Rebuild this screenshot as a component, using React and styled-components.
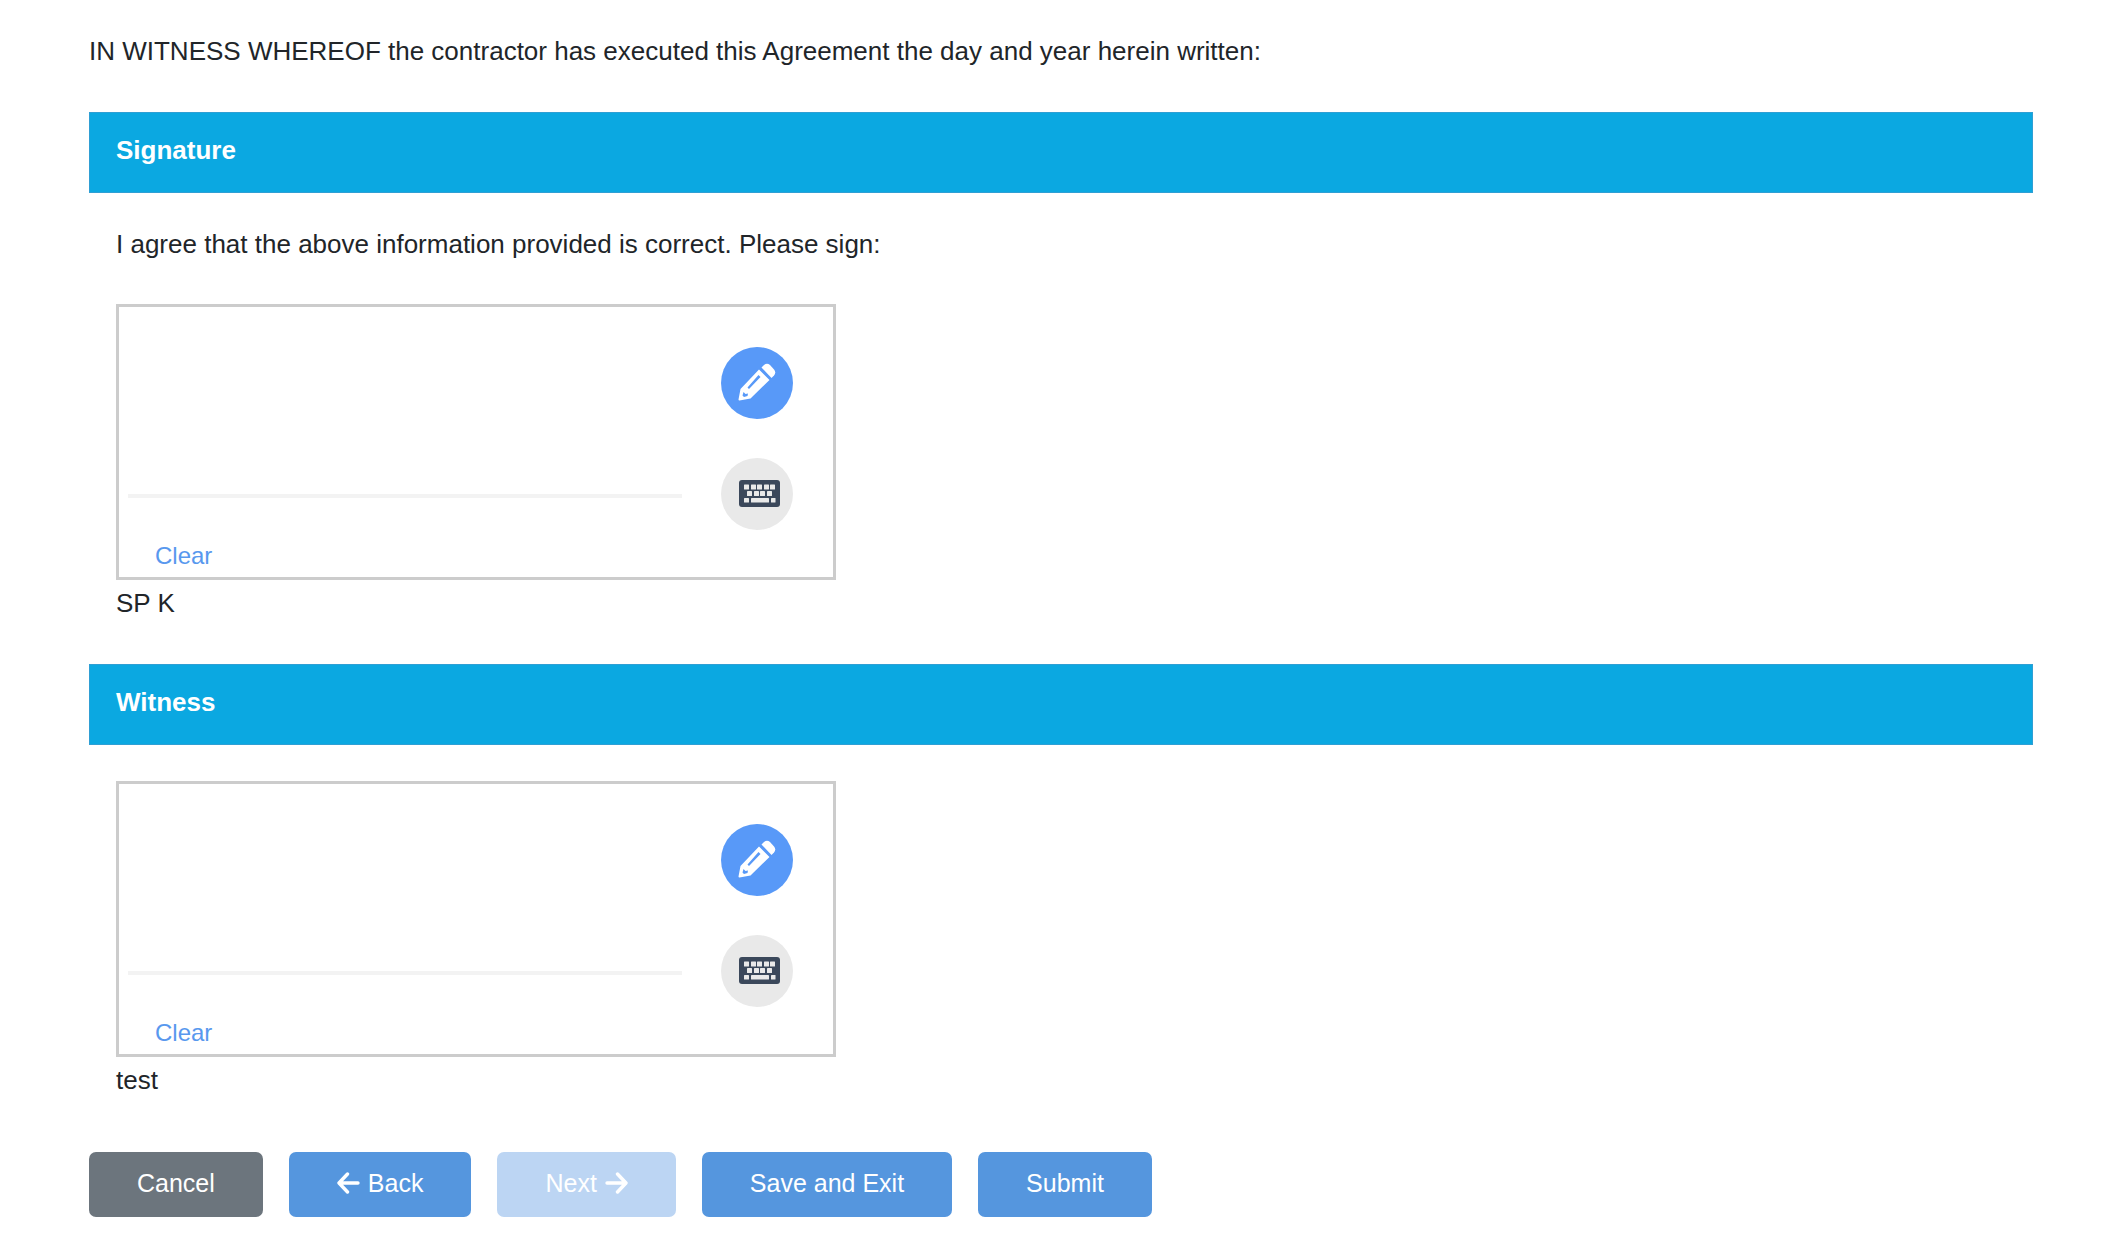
import React from "react";
import styled, { createGlobalStyle } from "styled-components";

const GlobalStyle = createGlobalStyle`
  *, *::before, *::after { box-sizing: border-box; }
  body {
    margin: 0;
    background: #fff;
    color: #212529;
    font-family: "Liberation Sans", Arial, sans-serif;
    font-size: 26px;
    line-height: 38px;
  }
`;

const Page = styled.main`
  padding: 36px 75px 20px 89px;
`;

const Paragraph = styled.p`
  margin: 0;
  line-height: 30px;
`;

const Section = styled.section`
  margin-top: ${(p) => p.$gap}px;
`;

const SectionTitle = styled.h2`
  margin: 0;
  padding: 18px 26px 23px;
  border: 1px solid #2f9fd4;
  background: #0ba8e1;
  color: #fff;
  font-size: 26px;
  line-height: 38px;
  font-weight: 700;
`;

const SectionBody = styled.div`
  display: flex;
  flex-direction: column;
  gap: 45px;
  padding: 36px 27px 0;
`;

const SignatureBox = styled.div`
  display: flex;
  justify-content: space-between;
  max-width: 720px;
  height: 276px;
  padding: 0 40px 0 9px;
  border: 3px solid #ccc;
`;

const DrawingArea = styled.div`
  display: flex;
  flex-direction: column;
  justify-content: flex-end;
  align-items: flex-start;
  flex: 0 1 554px;
`;

const Baseline = styled.div`
  width: 100%;
  height: 4px;
  background: #f3f3f3;
`;

const ClearButton = styled.button`
  margin: 39px 0 2px 27px;
  padding: 0;
  border: 0;
  background: none;
  color: #5898ee;
  font: inherit;
  font-size: 24px;
  cursor: pointer;
`;

const ModeSwitch = styled.div`
  display: flex;
  flex-direction: column;
  gap: 39px;
  padding-top: 40px;
`;

const ModeButton = styled.button`
  display: flex;
  align-items: center;
  justify-content: center;
  width: 72px;
  height: 72px;
  padding: 0;
  border: 0;
  border-radius: 50%;
  background: ${(p) => (p.$active ? "#5899f8" : "#e9e9e9")};
  color: ${(p) => (p.$active ? "#fff" : "#3b485b")};
  cursor: pointer;
`;

const SignerName = styled.p`
  margin: 4px 0 0;
`;

const Actions = styled.div`
  display: flex;
  flex-wrap: wrap;
  gap: 26px;
  margin-top: 53px;
`;

const ActionButton = styled.button`
  display: flex;
  align-items: center;
  gap: 8px;
  padding: 12px 48px 15px;
  border: 0;
  border-radius: 7px;
  background: ${(p) => (p.$secondary ? "#6c757d" : "#5596de")};
  color: #fff;
  font: inherit;
  font-size: 25px;
  cursor: pointer;

  &:disabled {
    background: #bcd5f3;
    cursor: default;
  }
`;

const ArrowIcon = ({ d }) => (
  <svg
    width="23"
    height="24"
    viewBox="0 0 23 24"
    fill="none"
    stroke="currentColor"
    strokeWidth="3.400"
    strokeLinecap="round"
    strokeLinejoin="round"
    aria-hidden="true"
  >
    <path d={d} />
  </svg>
);

const PencilIcon = () => (
  <svg width="38" height="40" viewBox="0 0 38 40" fill="currentColor" aria-hidden="true">
    <path d="M23.500 4.500 26 2Q29-.5 32 2l4 4.500q2.500 3 0 6L33.500 15z" />
    <path
      fillRule="evenodd"
      d="M21 6.500 31.500 17 12.500 35.500 1.500 37.500Q.5 37.500.5 36.500L2.500 26zM20.500 12 9.500 24.500l1.500 1.500L22.500 14zM5.500 29 4.500 32.500 6 34 9.500 33 10 30.500 7.500 31z"
    />
  </svg>
);

const KeyboardIcon = () => (
  <svg width="46" height="28" viewBox="0 0 46 28" aria-hidden="true">
    <rect x="5" width="41" height="27" rx="3" fill="currentColor" />
    <g fill="#e9e9e9">
      {[10, 17, 23, 30, 36].map((x) => <rect key={x} x={x} y="4.500" width="5" height="5" rx="0.500" />)}
      {[13, 20, 26, 33].map((x) => <rect key={x} x={x} y="11" width="5" height="5" rx="0.500" />)}
      <rect x="10" y="18" width="5" height="4.500" rx="0.500" />
      <rect x="17" y="18" width="18" height="4.500" rx="0.500" />
      <rect x="37" y="18" width="4.500" height="4.500" rx="0.500" />
    </g>
  </svg>
);

function SignaturePad({ label, signer }) {
  return (
    <div>
      <SignatureBox role="group" aria-label={label}>
        <DrawingArea>
          <Baseline />
          <ClearButton type="button">Clear</ClearButton>
        </DrawingArea>
        <ModeSwitch>
          <ModeButton type="button" $active aria-label="Draw"><PencilIcon /></ModeButton>
          <ModeButton type="button" aria-label="Type"><KeyboardIcon /></ModeButton>
        </ModeSwitch>
      </SignatureBox>
      <SignerName>{signer}</SignerName>
    </div>
  );
}

export default function App() {
  return (
    <>
      <GlobalStyle />
      <Page>
        <Paragraph>
          IN WITNESS WHEREOF the contractor has executed this Agreement the day and year herein written:
        </Paragraph>
        <Section $gap={46}>
          <SectionTitle>Signature</SectionTitle>
          <SectionBody>
            <Paragraph>I agree that the above information provided is correct. Please sign:</Paragraph>
            <SignaturePad label="Signature" signer="SP K" />
          </SectionBody>
        </Section>
        <Section $gap={42}>
          <SectionTitle>Witness</SectionTitle>
          <SectionBody>
            <SignaturePad label="Witness" signer="test" />
          </SectionBody>
        </Section>
        <Actions>
          <ActionButton type="button" $secondary>Cancel</ActionButton>
          <ActionButton type="button">
            <ArrowIcon d="M10.500 3 2 12l8.500 9M2.500 12H21" />
            Back
          </ActionButton>
          <ActionButton type="button" disabled>
            Next
            <ArrowIcon d="M12.500 3 21 12l-8.500 9M20.500 12H2" />
          </ActionButton>
          <ActionButton type="button">Save and Exit</ActionButton>
          <ActionButton type="submit">Submit</ActionButton>
        </Actions>
      </Page>
    </>
  );
}
